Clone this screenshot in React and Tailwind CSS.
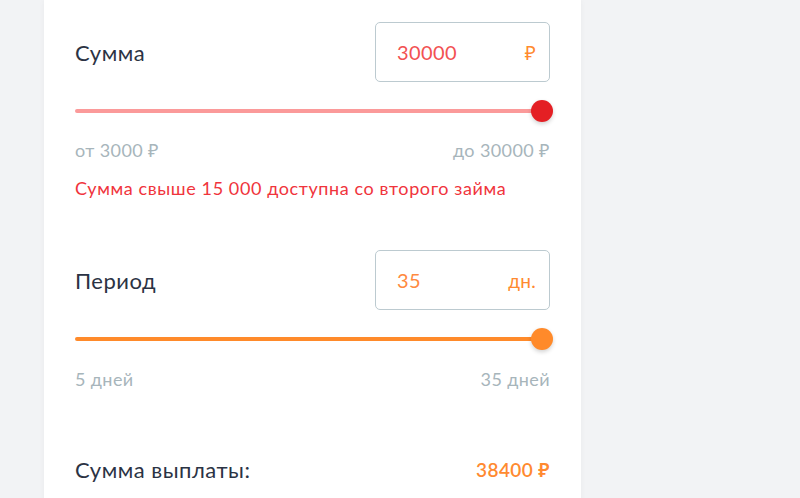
import React from 'react';

function ValueBox({ value, unit, valueClass }) {
  return (
    <div className="w-[175px] h-[60px] border border-[#bccad0] rounded-[5px] flex items-center justify-between pl-[21px] pr-[13px]">
      <span className={`text-[20px] tracking-[0.4px] leading-none ${valueClass}`}>{value}</span>
      <span className="text-[19px] tracking-[0.3px] leading-none text-[#ff8a30]">{unit}</span>
    </div>
  );
}

function Slider({ track, thumb }) {
  return (
    <div className="relative h-[22px] mr-[-3px]">
      <div className={`absolute left-0 right-[11px] top-[9px] h-[4px] rounded-full ${track}`} />
      <div className={`absolute right-0 top-0 w-[22px] h-[22px] rounded-full shadow-[0_2px_4px_rgba(0,0,0,0.18)] ${thumb}`} />
    </div>
  );
}

export default function App() {
  return (
    <div
      className="w-[800px] h-[498px] overflow-hidden bg-[#f2f3f5]"
      style={{ fontFamily: 'Lato, "Noto Sans", sans-serif' }}
    >
      <div className="ml-[44px] w-[537px] min-h-[520px] bg-white px-[31px] pt-[22px] shadow-[0_0_6px_rgba(0,0,0,0.04)]">
        {/* sum */}
        <div className="flex items-center justify-between">
          <span className="text-[22px] tracking-[0.5px] text-[#2b3344]">Сумма</span>
          <ValueBox value="30000" unit="₽" valueClass="text-[#f25252]" />
        </div>
        <div className="mt-[18px]">
          <Slider track="bg-[#fb9a9a]" thumb="bg-[#e41f24]" />
        </div>
        <div className="mt-[18px] flex justify-between text-[18px] tracking-[0.4px] leading-[20px] text-[#a7b5bb]">
          <span>от 3000 ₽</span>
          <span>до 30000 ₽</span>
        </div>
        <div className="mt-[18px] text-[18px] tracking-[0.6px] leading-[20px] text-[#f0343c]">
          Сумма свыше 15 000 доступна со второго займа
        </div>

        {/* period */}
        <div className="mt-[52px] flex items-center justify-between">
          <span className="text-[22px] tracking-[0.5px] text-[#2b3344]">Период</span>
          <ValueBox value="35" unit="дн." valueClass="text-[#ff8a40]" />
        </div>
        <div className="mt-[18px]">
          <Slider track="bg-[#ff8a2a]" thumb="bg-[#ff8a2a]" />
        </div>
        <div className="mt-[19px] flex justify-between text-[18px] tracking-[0.4px] leading-[20px] text-[#a7b5bb]">
          <span>5 дней</span>
          <span>35 дней</span>
        </div>

        {/* total */}
        <div className="mt-[67px] flex items-center justify-between">
          <span className="text-[22px] tracking-[0.5px] leading-[28px] text-[#2b3344]">Сумма выплаты:</span>
          <span className="text-[19px] tracking-[0.4px] font-semibold text-[#ff8a30]">38400 ₽</span>
        </div>
      </div>
    </div>
  );
}
